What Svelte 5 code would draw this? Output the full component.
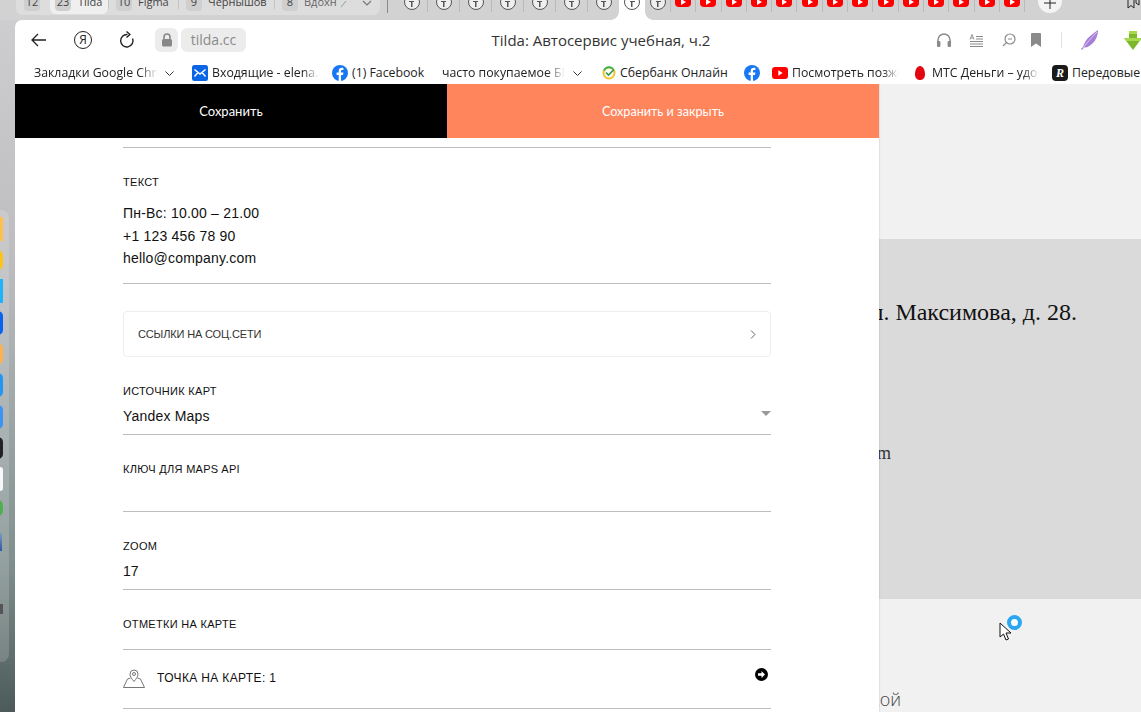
<script>
	// cropped browser window: Tilda block settings panel over the page preview
	const groupTabs = [
		{ count: '12', title: '', width: 34 },
		{ count: '23', title: 'Tilda', width: 58, active: true },
		{ count: '10', title: 'Figma', width: 70 },
		{ count: '9', title: 'Чернышов', width: 96 },
		{ count: '8', title: 'Вдохн', width: 66, fade: true }
	];
	const tildaTabs = [0, 1, 2, 3, 4, 5, 6];
	const youtubeTabs = Array.from({ length: 14 });

	const dockIcons = [
		{ color: '#fdc04e', h: 24, r: 0 },
		{ color: '#fcc419', h: 22, r: 11 },
		{ color: '#1eb4fb', h: 24, r: 0 },
		{ color: '#0a63f0', h: 24, r: 5 },
		{ color: '#fdb24d', h: 22, r: 6 },
		{ color: '#2196f3', h: 24, r: 5 },
		{ color: '#3b93f5', h: 24, r: 5 },
		{ color: '#222', h: 22, r: 5 },
		{ color: '#f8f8f8', h: 24, r: 3 },
		{ color: '#4caf50', h: 18, r: 9 }
	];
</script>

<div class="screen">
	<div class="tabstrip">
		<div class="tabgroup">
			{#each groupTabs as tab}
				<div class="gtab" class:active={tab.active} style="width: {tab.width}px">
					<span class="count">{tab.count}</span>
					{#if tab.title}<span class="gtitle" class:fade={tab.fade}>{tab.title}</span>{/if}
				</div>
			{/each}
			<svg class="fadearrow" width="7" height="8" viewBox="0 0 7 8"><path d="M1 8l5-6" fill="none" stroke="#999" /></svg>
			<svg class="more" width="10" height="6" viewBox="0 0 10 6"><path d="M1 1l4 4 4-4" fill="none" stroke="#777" stroke-width="1.2" /></svg>
		</div>
		<div class="divider"></div>
		<div class="tabrun">
			{#each tildaTabs as t}
				<div class="mini">
					<span class="tilda"><i></i></span>
				</div>
			{/each}
			<div class="mini current"><span class="tilda"><i></i></span></div>
			<div class="mini next"><span class="tilda"><i></i></span></div>
			{#each youtubeTabs as y}
				<div class="mini yt">
					<svg width="16" height="17" viewBox="0 0 16 17"><rect width="16" height="17" rx="4" fill="#f00" /><path d="M6 9l5 3-5 3z" fill="#fff" /></svg>
				</div>
			{/each}
		</div>
		<div class="newtab">
			<svg width="12" height="12" viewBox="0 0 12 12"><path d="M6 0v12M0 6h12" stroke="#222" stroke-width="1" /></svg>
		</div>
		<svg class="saved" width="14" height="16" viewBox="0 0 14 16"><path d="M2 0v12l3-2.500L8 12V0M10 0v7l3 2V0" fill="none" stroke="#222" stroke-width="1" /></svg>
	</div>

	<div class="below">
		<div class="dockside">
			<div class="dock">
				{#each dockIcons as icon}
					<span class="dockicon" style="background: {icon.color}; height: {icon.h}px; border-radius: {icon.r}px"></span>
				{/each}
				<span class="dockdots"></span>
				<span class="dockend"></span>
			</div>
		</div>

		<div class="window">
			<header class="toolbar">
				<div class="nav">
					<svg width="16" height="14" viewBox="0 0 16 14"><path d="M15 7H1M7 1L1 7l6 6" fill="none" stroke="#222" stroke-width="1.3" /></svg>
					<span class="ya">Я</span>
					<svg width="16" height="18" viewBox="0 0 16 18"><path d="M13.600 7.500A6.200 6.200 0 1 1 8.500 3.600" fill="none" stroke="#222" stroke-width="1.4" /><path d="M7.500 0.600l3.400 3-3.400 3" fill="none" stroke="#222" stroke-width="1.4" /></svg>
				</div>
				<div class="lock">
					<svg width="12" height="14" viewBox="0 0 12 14"><path d="M3 6V4a3 3 0 0 1 6 0v2" fill="none" stroke="#888" stroke-width="1.6" /><rect x="1" y="6" width="10" height="7.500" rx="1.500" fill="#888" /></svg>
				</div>
				<div class="url">tilda.cc</div>
				<div class="title">Tilda: Автосервис учебная, ч.2</div>
				<div class="tools">
					<svg class="t-phones" width="16" height="14" viewBox="0 0 16 14"><path d="M2 9V7a6 6 0 0 1 12 0v2" fill="none" stroke="#8a8a8a" stroke-width="1.5" /><rect x="1" y="8" width="3.400" height="6" rx="1.200" fill="#8a8a8a" /><rect x="11.600" y="8" width="3.400" height="6" rx="1.200" fill="#8a8a8a" /></svg>
					<svg class="t-reader" width="14" height="13" viewBox="0 0 14 13"><path d="M7 2.500h7M7 5h7M1 7.500h13M1 10h13M1 12.500h13" stroke="#8a8a8a" stroke-width="1" /><path d="M1 5.500L3 0.500l2 5M1.800 4h2.400" fill="none" stroke="#8a8a8a" stroke-width="0.900" /></svg>
					<svg class="t-zoom" width="14" height="14" viewBox="0 0 14 14"><circle cx="8" cy="6" r="5" fill="none" stroke="#8a8a8a" stroke-width="1.2" /><path d="M6 6h4" stroke="#8a8a8a" stroke-width="1.2" /><path d="M4.400 9.600L1 13" stroke="#8a8a8a" stroke-width="1.2" /></svg>
					<svg class="t-mark" width="10" height="14" viewBox="0 0 10 14"><path d="M0 1a1 1 0 0 1 1-1h8a1 1 0 0 1 1 1v13L5 10.500 0 14z" fill="#8a8a8a" /></svg>
					<span class="toolsep"></span>
					<svg class="t-feather" width="18" height="20" viewBox="0 0 18 20"><path d="M0 19C3 17 3 12 7 8 10 5 14 2 17 0 17 5 15 10 12 13 9 16 6 18 3 17.500L1 20z" fill="#a67fd8" /><path d="M2 18C6 13 10 8 16 2" fill="none" stroke="#e6d8f5" stroke-width="0.800" /></svg>
					<svg class="t-green" width="18" height="19" viewBox="0 0 18 19"><path d="M5 0h8v7h5l-9 12L0 7h5z" fill="#7cb82a" /><path d="M5 0h8v3H5zM0 7h18l-2 3H2z" fill="#a6d94e" /></svg>
				</div>
			</header>

			<nav class="bookmarks">
				<span class="bm fadeout" style="width: 124px">Закладки Google Chrome</span>
				<svg class="chev" width="9" height="5" viewBox="0 0 9 5"><path d="M0.500 0.500l4 4 4-4" fill="none" stroke="#333" /></svg>
				<span class="bmicon">
					<svg width="16" height="16" viewBox="0 0 16 16"><rect width="16" height="16" rx="2.500" fill="#0a66e6" /><path d="M2.500 4.500L8 9l5.500-4.500M2.500 11.500L6 7.500M13.500 11.500L10 7.500" fill="none" stroke="#fff" stroke-width="1.400" /></svg>
				</span>
				<span class="bm fadeout" style="width: 107px">Входящие - elena.s</span>
				<span class="bmicon fb gapped">
					<svg width="16" height="16" viewBox="0 0 16 16"><circle cx="8" cy="8" r="8" fill="#1877f2" /><path d="M9 16V10h2l.4-2.400H9V6.200c0-.8.300-1.200 1.200-1.200h1.200V3C11 2.900 10.400 2.800 9.800 2.800 7.900 2.800 6.700 4 6.700 6v1.600H4.600V10h2.100v6z" fill="#fff" /></svg>
				</span>
				<span class="bm" style="width: 90px">(1) Facebook</span>
				<span class="bm fadeout" style="width: 123px">часто покупаемое БГ</span>
				<svg class="chev2" width="9" height="5" viewBox="0 0 9 5"><path d="M0.500 0.500l4 4 4-4" fill="none" stroke="#333" /></svg>
				<span class="bmicon">
					<svg width="14" height="14" viewBox="0 0 14 14"><circle cx="7" cy="7" r="5.500" fill="none" stroke="#f2c230" stroke-width="2" /><path d="M2 4.500A5.500 5.500 0 0 1 11 3" fill="none" stroke="#3bb54a" stroke-width="2" /><path d="M4 6.500l2.500 2.500L12 3.500" fill="none" stroke="#2d9d4a" stroke-width="1.700" /></svg>
				</span>
				<span class="bm" style="width: 124px">Сбербанк Онлайн</span>
				<span class="bmicon fb">
					<svg width="16" height="16" viewBox="0 0 16 16"><circle cx="8" cy="8" r="8" fill="#1877f2" /><path d="M9 16V10h2l.4-2.400H9V6.200c0-.8.300-1.200 1.200-1.200h1.200V3C11 2.900 10.400 2.800 9.800 2.800 7.900 2.800 6.700 4 6.700 6v1.600H4.600V10h2.100v6z" fill="#fff" /></svg>
				</span>
				<span class="bmicon yt2">
					<svg width="16" height="12" viewBox="0 0 16 12"><rect width="16" height="12" rx="3" fill="#f00" /><path d="M6.300 3.300l4.400 2.700-4.400 2.700z" fill="#fff" /></svg>
				</span>
				<span class="bm fadeout" style="width: 107px">Посмотреть позже</span>
				<span class="bmicon mts">
					<svg width="10" height="14" viewBox="0 0 10 14"><path d="M5 0C8 0 10 4 10 8.500 10 11.800 8 14 5 14S0 11.800 0 8.500C0 4 2 0 5 0z" fill="#e30611" /></svg>
				</span>
				<span class="bm fadeout" style="width: 107px">МТС Деньги – удоб</span>
				<span class="bmicon rr">R</span>
				<span class="bm">Передовые</span>
			</nav>

			<div class="content">
				<section class="panel">
					<div class="actions">
						<button class="save">Сохранить</button>
						<button class="saveclose">Сохранить и закрыть</button>
					</div>
					<div class="form">
						<div class="line topline"></div>
						<div class="field text">
							<div class="label">Текст</div>
							<div class="multi">
								Пн-Вс: 10.00 – 21.00<br />+1 123 456 78 90<br />hello@company.com
							</div>
						</div>
						<div class="sociallinks">
							<span>ссылки на соц.сети</span>
							<svg width="6" height="9" viewBox="0 0 6 9"><path d="M1 0.500l4 4-4 4" fill="none" stroke="#666" /></svg>
						</div>
						<div class="field source">
							<div class="label">Источник карт</div>
							<div class="select">
								<span>Yandex Maps</span>
								<i class="caret"></i>
							</div>
						</div>
						<div class="field apikey">
							<div class="label">Ключ для Maps API</div>
						</div>
						<div class="field zoom">
							<div class="label">Zoom</div>
							<div class="value">17</div>
						</div>
						<div class="field marks">
							<div class="label">Отметки на карте</div>
						</div>
						<div class="point">
							<svg width="22" height="19" viewBox="0 0 22 19"><path d="M11 12.500C8.500 9.500 7 7.500 7 5a4 4 0 0 1 8 0c0 2.500-1.500 4.500-4 7.500z" fill="none" stroke="#666" stroke-width="0.900" /><circle cx="11" cy="5" r="1.500" fill="none" stroke="#666" stroke-width="0.900" /><path d="M7.500 9L4.500 10 0.500 18.500h21L17.500 10l-3-1" fill="none" stroke="#666" stroke-width="0.900" /></svg>
							<span class="pointname">Точка на карте: 1</span>
							<svg class="go" width="13" height="13" viewBox="0 0 13 13"><circle cx="6.500" cy="6.500" r="6.500" fill="#000" /><path d="M3 5.300h3.500V3l3.500 3.500L6.500 10V7.700H3z" fill="#fff" /></svg>
						</div>
						<div class="line"></div>
					</div>
				</section>

				<aside class="preview">
					<div class="graytop"></div>
					<div class="grayblock">
						<div class="address">ул. Максимова, д. 28.</div>
						<div class="email">hello@company.com</div>
					</div>
					<div class="lowertext">с доставкой</div>
					<div class="cursor">
						<svg width="14" height="19" viewBox="0 0 14 19"><path d="M1 1v14l3.500-3 2.500 6 2.500-1-2.500-6h5z" fill="#fff" stroke="#111" stroke-width="1" /></svg>
						<span class="busy"></span>
					</div>
				</aside>
			</div>
		</div>
	</div>
</div>

<style>
	:global(body) {
		margin: 0;
		overflow: hidden;
		background: #c9c9cb;
	}

	.screen {
		width: 1141px;
		height: 712px;
		overflow: hidden;
		display: flex;
		flex-direction: column;
		font-family: 'Open Sans', 'Noto Sans', sans-serif;
		background: linear-gradient(#cfcfd1, #bdbdc0 260px, #80908e 560px, #4c5b59);
	}

	/* tab strip, cut off by the crop at the top */
	.tabstrip {
		height: 20px;
		flex: none;
		display: flex;
		align-items: flex-start;
		overflow: hidden;
		position: relative;
		background: #d2d2d3;
	}

	.tabgroup {
		width: 364px;
		height: 15px;
		margin-left: 16px;
		flex: none;
		display: flex;
		align-items: flex-start;
		background: #dddddd;
		border-radius: 0 0 7px 7px;
		position: relative;
	}

	.gtab {
		height: 14px;
		display: flex;
		align-items: flex-start;
		gap: 6px;
		padding-left: 8px;
		font-size: 11px;
		color: #444;
		box-sizing: border-box;
		position: relative;
	}

	.gtab:not(.active):not(:first-child)::before {
		content: '';
		position: absolute;
		left: 0;
		top: 0;
		width: 1px;
		height: 9px;
		background: #c4c4c4;
	}

	.gtab.active {
		background: #efefef;
		border-radius: 0 0 6px 6px;
		padding-left: 5px;
		gap: 7px;
	}

	.count {
		width: 16px;
		height: 11px;
		flex: none;
		background: #cfcfcf;
		border-radius: 0 0 4px 4px;
		text-align: center;
		line-height: 4px;
	}

	.gtitle {
		line-height: 4px;
		height: 11px;
	}

	.gtitle.fade {
		color: #666;
	}

	.fadearrow {
		position: absolute;
		left: 324px;
		top: -1px;
	}

	.more {
		position: absolute;
		right: 8px;
		top: 0;
	}

	.divider {
		width: 1px;
		height: 13px;
		margin-left: 7px;
		background: #888;
		flex: none;
	}

	.tabrun {
		display: flex;
		margin-left: 8px;
		flex: none;
	}

	.mini {
		width: 32px;
		height: 12px;
		flex: none;
		display: flex;
		justify-content: center;
		border-right: 1px solid #bbb;
		box-sizing: border-box;
	}

	.tilda {
		width: 16px;
		height: 16px;
		margin-top: -6px;
		border: 1.500px solid #555;
		border-radius: 50%;
		background: #eee;
		box-sizing: border-box;
		display: flex;
		justify-content: center;
		align-items: flex-end;
	}

	.tilda i {
		width: 5px;
		height: 6px;
		margin-bottom: 2px;
		border-top: 1.500px solid #555;
		background: linear-gradient(#555, #555) center / 1.500px 100% no-repeat;
		box-sizing: border-box;
	}

	.mini.current {
		width: 26px;
		height: 20px;
		margin-left: -1px;
		background: #fff;
		border: 0;
		position: relative;
	}

	.mini.current::before,
	.mini.current::after {
		content: '';
		position: absolute;
		bottom: 0;
		width: 8px;
		height: 8px;
	}

	.mini.current::before {
		left: -8px;
		background: radial-gradient(circle at 0 0, transparent 7.500px, #fff 8px);
	}

	.mini.current::after {
		right: -8px;
		background: radial-gradient(circle at 100% 0, transparent 7.500px, #fff 8px);
	}

	.mini.current .tilda {
		background: #fff;
	}

	.mini.next {
		width: 26px;
		padding-left: 1px;
	}

	.mini.yt {
		width: 25.300px;
	}

	.mini.yt svg {
		margin-top: -10px;
	}

	.newtab {
		position: absolute;
		left: 1038px;
		top: -11px;
		width: 24px;
		height: 24px;
		border-radius: 50%;
		background: #f4f4f4;
		display: flex;
		align-items: center;
		justify-content: center;
	}

	.newtab svg {
		margin-top: 4px;
	}

	.saved {
		position: absolute;
		left: 1126px;
		top: -4px;
	}

	.below {
		flex: 1;
		min-height: 0;
		display: flex;
	}

	/* macOS-style dock peeking in on the left */
	.dockside {
		width: 15px;
		flex: none;
		padding-top: 190px;
		box-sizing: border-box;
	}

	.dock {
		width: 9px;
		height: 452px;
		background: rgba(255, 255, 255, 0.16);
		border-radius: 0 8px 8px 0;
		display: flex;
		flex-direction: column;
		align-items: flex-end;
		gap: 8px;
		padding-top: 7px;
		box-sizing: border-box;
		overflow: hidden;
	}

	.dockicon {
		width: 14px;
		margin-right: 6px;
		flex: none;
		align-self: flex-end;
	}

	.dockdots {
		width: 2px;
		height: 18px;
		margin: 8px 7px 0 0;
		background: linear-gradient(#7f9bbd, #2c58a8);
		flex: none;
	}

	.dockend {
		width: 3px;
		height: 10px;
		margin: 45px 6px 0 0;
		background: #555;
		flex: none;
	}

	.window {
		flex: 1;
		min-width: 0;
		display: flex;
		flex-direction: column;
		background: #fff;
		border-radius: 7px 0 0 0;
		overflow: hidden;
	}

	.toolbar {
		height: 42px;
		flex: none;
		display: flex;
		align-items: center;
		box-sizing: border-box;
		padding: 0 0 2px 16px;
	}

	.nav {
		display: flex;
		align-items: center;
		gap: 27px;
		width: 124px;
		flex: none;
	}

	.ya {
		width: 18px;
		height: 18px;
		border: 1.300px solid #222;
		border-radius: 50%;
		font-size: 12px;
		line-height: 15px;
		text-align: center;
		color: #222;
		box-sizing: border-box;
	}

	.lock {
		width: 23px;
		height: 24px;
		background: #ececec;
		border-radius: 6px;
		display: flex;
		align-items: center;
		justify-content: center;
		margin-right: 3px;
		flex: none;
	}

	.url {
		width: 65px;
		height: 24px;
		flex: none;
		background: #ececec;
		border-radius: 6px;
		font-size: 14px;
		line-height: 24px;
		text-align: center;
		color: #8a8a8a;
	}

	.title {
		width: 220px;
		margin-left: 245px;
		flex: none;
		font-size: 15px;
		white-space: nowrap;
		color: #333;
		text-align: center;
	}

	.tools {
		display: flex;
		align-items: center;
		margin-left: 225px;
		flex: none;
	}

	.t-reader {
		margin-left: 17px;
	}

	.t-zoom {
		margin-left: 19px;
	}

	.t-mark {
		margin-left: 15px;
	}

	.toolsep {
		width: 1px;
		height: 16px;
		background: #e2e2e2;
		margin-left: 20px;
	}

	.t-feather {
		margin-left: 19px;
	}

	.t-green {
		margin-left: 25px;
		flex: none;
	}

	.bookmarks {
		height: 22px;
		flex: none;
		display: flex;
		align-items: center;
		white-space: nowrap;
		font-size: 12.300px;
		color: #222;
		padding-left: 19px;
		overflow: hidden;
	}

	.bm {
		display: inline-block;
		overflow: hidden;
		flex: none;
		line-height: 20px;
	}

	.fadeout {
		-webkit-mask-image: linear-gradient(90deg, #000 85%, transparent);
		mask-image: linear-gradient(90deg, #000 85%, transparent);
	}

	.chev {
		margin: 0 18px 0 7px;
		flex: none;
	}

	.chev2 {
		margin: 0 20px 0 8px;
		flex: none;
	}

	.bmicon {
		flex: none;
		display: flex;
		align-items: center;
		margin-right: 4px;
	}

	.bmicon.gapped {
		margin-left: 13px;
	}

	.bmicon.yt2 {
		margin-left: 8px;
	}

	.bmicon.mts {
		margin: 0 7px 0 16px;
	}

	.bmicon.rr {
		width: 16px;
		height: 16px;
		margin-left: 13px;
		background: #1a1a1a;
		border-radius: 4px;
		color: #fff;
		font: italic bold 12px 'Liberation Serif', serif;
		justify-content: center;
	}

	.content {
		flex: 1;
		min-height: 0;
		display: flex;
	}

	/* settings panel */
	.panel {
		width: 864px;
		flex: none;
		background: #fff;
		display: flex;
		flex-direction: column;
		font-family: 'Liberation Sans', Arial, sans-serif;
		position: relative;
		z-index: 1;
		box-shadow: 1px 0 1px rgba(0, 0, 0, 0.06);
	}

	.actions {
		display: flex;
		height: 54px;
		flex: none;
	}

	.actions button {
		width: 432px;
		border: 0;
		padding: 0;
		color: #fff;
		font-family: Lato, Roboto, sans-serif;
		font-size: 13px;
	}

	.save {
		background: #000;
	}

	.actions .saveclose {
		background: #ff855d;
		font-size: 12.600px;
	}

	.form {
		width: 648px;
		margin-left: 108px;
	}

	.line {
		height: 1px;
		background: #bdbdbd;
	}

	.topline {
		margin-top: 9px;
	}

	.label {
		font-size: 11px;
		line-height: 14px;
		text-transform: uppercase;
		letter-spacing: 0.300px;
		color: #111;
	}

	.field {
		border-bottom: 1px solid #bdbdbd;
		box-sizing: border-box;
	}

	.field.text {
		height: 136px;
		padding-top: 27px;
	}

	.multi {
		margin-top: 13px;
		font-size: 14px;
		line-height: 22.500px;
		letter-spacing: 0.200px;
		color: #111;
	}

	.sociallinks {
		height: 46px;
		margin: 27px 0 26px;
		padding: 0 14px;
		border: 1px solid #eee;
		border-radius: 4px;
		box-sizing: border-box;
		display: flex;
		align-items: center;
		justify-content: space-between;
		font-size: 11px;
		text-transform: uppercase;
		letter-spacing: -0.150px;
		color: #333;
	}

	.field.source {
		height: 52px;
		padding-top: 1px;
	}

	.select {
		display: flex;
		align-items: center;
		justify-content: space-between;
		margin-top: 8px;
		font-size: 14px;
		line-height: 20px;
		letter-spacing: 0.200px;
		color: #111;
	}

	.caret {
		width: 0;
		height: 0;
		border: 5px solid transparent;
		border-top: 5px solid #999;
		border-bottom: 0;
		margin-top: -5px;
	}

	.field.apikey {
		height: 77px;
		padding-top: 27px;
	}

	.field.zoom {
		height: 78px;
		padding-top: 27px;
	}

	.value {
		margin-top: 8px;
		font-size: 14px;
		line-height: 20px;
		color: #111;
	}

	.field.marks {
		height: 60px;
		padding-top: 27px;
	}

	.point {
		height: 58px;
		padding-bottom: 2px;
		box-sizing: border-box;
		display: flex;
		align-items: center;
		font-size: 12px;
		color: #111;
	}

	.pointname {
		margin-left: 12px;
		text-transform: uppercase;
		letter-spacing: 0.350px;
	}

	.point .go {
		margin-left: auto;
		margin-right: 3px;
		margin-top: -8px;
	}

	/* page preview behind the panel */
	.preview {
		flex: 1;
		min-width: 0;
		position: relative;
		overflow: hidden;
		background: #f1f1f1;
		font-family: 'Liberation Serif', serif;
		color: #111;
		display: flex;
		flex-direction: column;
	}

	.graytop {
		height: 155px;
		flex: none;
	}

	.grayblock {
		height: 360px;
		flex: none;
		background: #dadada;
		overflow: hidden;
		box-sizing: border-box;
		padding-top: 59px;
		display: flex;
		flex-direction: column;
		align-items: flex-end;
	}

	.address {
		font-size: 24px;
		line-height: 28px;
		white-space: nowrap;
		margin-right: 64px;
	}

	.email {
		font-size: 18px;
		line-height: 20px;
		white-space: nowrap;
		margin-top: 117px;
		margin-right: 250px;
		color: #333;
	}

	.lowertext {
		width: 22px;
		margin-top: 88px;
		display: flex;
		justify-content: flex-end;
		font-family: 'Open Sans', sans-serif;
		font-size: 18px;
		font-weight: 300;
		color: #444;
		white-space: nowrap;
	}

	.cursor {
		position: absolute;
		left: 120px;
		top: 538px;
	}

	.busy {
		position: absolute;
		left: 8px;
		top: -7px;
		width: 15px;
		height: 15px;
		border: 4px solid #2ba6f2;
		border-radius: 50%;
		box-sizing: border-box;
		background: #fff;
	}
</style>
